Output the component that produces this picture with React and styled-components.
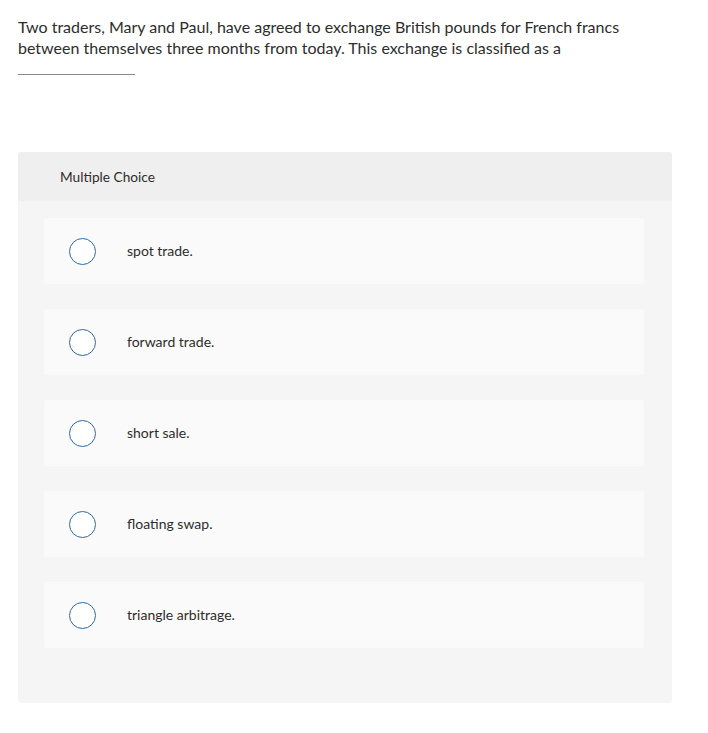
import React from 'react'
import styled, { createGlobalStyle } from 'styled-components'

const GlobalStyle = createGlobalStyle`
  body {
    margin: 0;
    background: #fff;
    font-family: Lato, "Open Sans", Arial, sans-serif;
    color: #333;
  }
`

const choices = ['spot trade.', 'forward trade.', 'short sale.', 'floating swap.', 'triangle arbitrage.']

export default function App() {
  return (
    <>
      <GlobalStyle />
      <Page>
        <Prompt>
          Two traders, Mary and Paul, have agreed to exchange British pounds for French francs
          between themselves three months from today. This exchange is classified as a
        </Prompt>
        <Blank />
        <Panel>
          <PanelHeader>Multiple Choice</PanelHeader>
          <ChoiceList>
            {choices.map((c) => (
              <Choice key={c}>
                <Radio />
                <ChoiceText>{c}</ChoiceText>
              </Choice>
            ))}
          </ChoiceList>
        </Panel>
      </Page>
    </>
  )
}

const Page = styled.div`
  padding: 16px 36px 30px 18px;
`

const Prompt = styled.div`
  font-size: 16px;
  line-height: 21px;
  color: #2d2d2d;
  width: 630px;
`

const Blank = styled.div`
  width: 117px;
  border-bottom: 1px solid #8a8a8a;
  margin-top: 16px;
`

const Panel = styled.div`
  margin-top: 77px;
  width: 654px;
  background: #f5f5f5;
  border-radius: 3px;
  overflow: hidden;
`

const PanelHeader = styled.div`
  background: #efefef;
  height: 49px;
  display: flex;
  align-items: center;
  padding-left: 42px;
  font-size: 13.7px;
  color: #2d2d2d;
`

const ChoiceList = styled.div`
  display: flex;
  flex-direction: column;
  gap: 25px;
  padding: 17px 28px 55px 26px;
`

const Choice = styled.div`
  height: 66px;
  background: #fafafa;
  border-radius: 3px;
  display: flex;
  align-items: center;
  padding-left: 25px;
`

const Radio = styled.span`
  width: 25px;
  height: 25px;
  border: 1.5px solid #2f6aa3;
  border-radius: 50%;
  background: #fff;
  flex-shrink: 0;
`

const ChoiceText = styled.span`
  margin-left: 31px;
  padding-bottom: 2px;
  font-size: 14px;
  color: #2d2d2d;
`
